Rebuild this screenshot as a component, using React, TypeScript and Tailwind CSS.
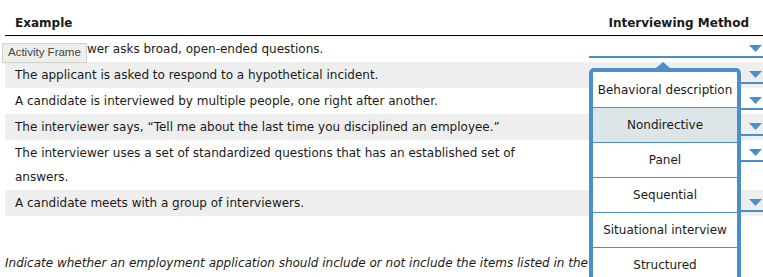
import React from 'react';

const ROWS: { text: string; gray: boolean }[] = [
  { text: 'The interviewer asks broad, open-ended questions.', gray: false },
  { text: 'The applicant is asked to respond to a hypothetical incident.', gray: true },
  { text: 'A candidate is interviewed by multiple people, one right after another.', gray: false },
  { text: 'The interviewer says, \u201cTell me about the last time you disciplined an employee.\u201d', gray: true },
  { text: 'The interviewer uses a set of standardized questions that has an established set of answers.', gray: false },
  { text: 'A candidate meets with a group of interviewers.', gray: true },
];

const OPTIONS = ['Behavioral description', 'Nondirective', 'Panel', 'Sequential', 'Situational interview', 'Structured'];

function Select() {
  return (
    <div className="mt-[4px] h-[18px] border-b-2 border-[#4a8fcb] flex justify-end">
      <svg width="13" height="7" viewBox="0 0 13 7" className="mt-[5px] mr-[1px]">
        <polygon points="0,0 13,0 6.5,7" fill="#4a8fcb" />
      </svg>
    </div>
  );
}

export default function App() {
  return (
    <div className="relative w-[763px] h-[277px] overflow-hidden bg-white text-[#1a1a1a] text-[12px]" style={{ fontFamily: '"DejaVu Sans", Verdana, sans-serif' }}>
      <div className="ml-[5px]">
        <div className="grid grid-cols-[584px_174px] border-b border-black pt-[15px] pb-[4px] font-bold leading-[16px]">
          <div className="pl-[10px]">Example</div>
          <div className="text-right pr-[14px]">Interviewing Method</div>
        </div>
        {ROWS.map((r, i) => (
          <div key={i} className={`grid grid-cols-[584px_174px] ${r.gray ? 'bg-[#eeeeee]' : 'bg-white'}`}>
            <div className="pl-[10px] pr-[30px] py-[1px] leading-[24px]">{r.text}</div>
            <div>
              <Select />
            </div>
          </div>
        ))}
        <p className="mt-[39px] italic leading-[16px] whitespace-nowrap">
          Indicate whether an employment application should include or not include the items listed in the table below.
        </p>
      </div>

      {/* tooltip */}
      <div className="absolute left-[2px] top-[43px] h-[20px] pl-[5px] pr-[5px] flex items-center bg-[#efeeeb] border border-[#d2d1ce] text-[#444] text-[11.5px]" style={{ fontFamily: '"Liberation Sans", Arial, sans-serif' }}>
        Activity Frame
      </div>

      {/* open dropdown */}
      <div className="absolute left-[589px] top-[62px] w-[152px]">
        <svg width="14" height="6" viewBox="0 0 14 6" className="ml-[67px] block">
          <polygon points="0,6 7,0 14,6" fill="#4a8fcb" />
        </svg>
        <div className="border-4 border-[#4a8fcb] rounded-t-[5px] bg-white">
          {OPTIONS.map((o, i) => (
            <div
              key={o}
              className={`h-[35px] flex items-center justify-center ${i > 0 ? 'border-t border-[#4a8fcb]' : ''} ${i === 1 ? 'bg-[#dce6e9]' : ''}`}
            >
              {o}
            </div>
          ))}
        </div>
      </div>
    </div>
  );
}
